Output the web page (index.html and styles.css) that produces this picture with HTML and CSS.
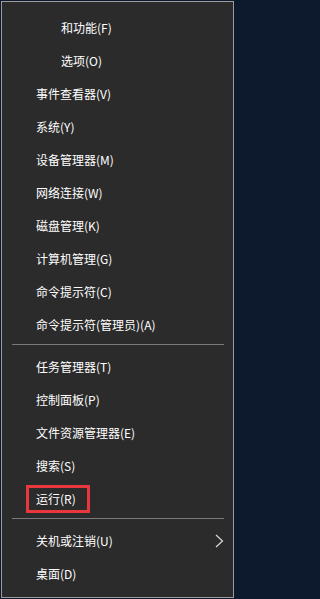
FILE: index.html
```html
<!DOCTYPE html>
<html lang="zh-CN">
<head>
<meta charset="utf-8">
<title>菜单</title>
<link rel="stylesheet" href="styles.css">
</head>
<body>
<div class="menu">
  <div class="item indent">和功能(F)</div>
  <div class="item indent">选项(O)</div>
  <div class="item">事件查看器(V)</div>
  <div class="item">系统(Y)</div>
  <div class="item">设备管理器(M)</div>
  <div class="item">网络连接(W)</div>
  <div class="item">磁盘管理(K)</div>
  <div class="item">计算机管理(G)</div>
  <div class="item">命令提示符(C)</div>
  <div class="item">命令提示符(管理员)(A)</div>
  <div class="sep"></div>
  <div class="item">任务管理器(T)</div>
  <div class="item">控制面板(P)</div>
  <div class="item">文件资源管理器(E)</div>
  <div class="item">搜索(S)</div>
  <div class="item"><span class="mark">运行(R)</span></div>
  <div class="sep sep2"></div>
  <div class="item">关机或注销(U)<svg class="chev" width="9" height="14" viewBox="0 0 9 14"><polyline points="1,1 7.5,7 1,13" fill="none" stroke="#d8d8d8" stroke-width="1.2"/></svg></div>
  <div class="item">桌面(D)</div>
</div>
</body>
</html>
```
FILE: styles.css
```css
html, body {
  margin: 0;
  padding: 0;
}
body {
  width: 235px;
  height: 599px;
  background: #0d1a2e;
  font-family: "Noto Sans CJK SC", "Noto Sans", sans-serif;
  overflow: hidden;
}
.menu {
  box-sizing: border-box;
  margin: 1px 0 0 1px;
  width: 233px;
  height: 597px;
  background: #2b2b2b;
  border: 1px solid #9c9c9c;
  padding-top: 9px;
  display: flex;
  flex-direction: column;
}
.item {
  height: 33px;
  display: flex;
  align-items: center;
  padding-left: 34px;
  color: #ffffff;
  font-size: 12px;
  white-space: nowrap;
  flex-shrink: 0;
}
.item.indent {
  padding-left: 59px;
}
.sep {
  height: 1px;
  background: #7a7a7a;
  margin: 3px 9px 5px 10px;
  flex-shrink: 0;
}
.sep2 {
  margin-top: 3px;
  margin-bottom: 5px;
}
.chev {
  margin-left: auto;
  margin-right: 9px;
}
.mark {
  position: relative;
}
.mark::after {
  content: "";
  position: absolute;
  left: -10px;
  right: -14px;
  top: -5px;
  bottom: -6px;
  border: 3px solid #e8383d;
}
```
